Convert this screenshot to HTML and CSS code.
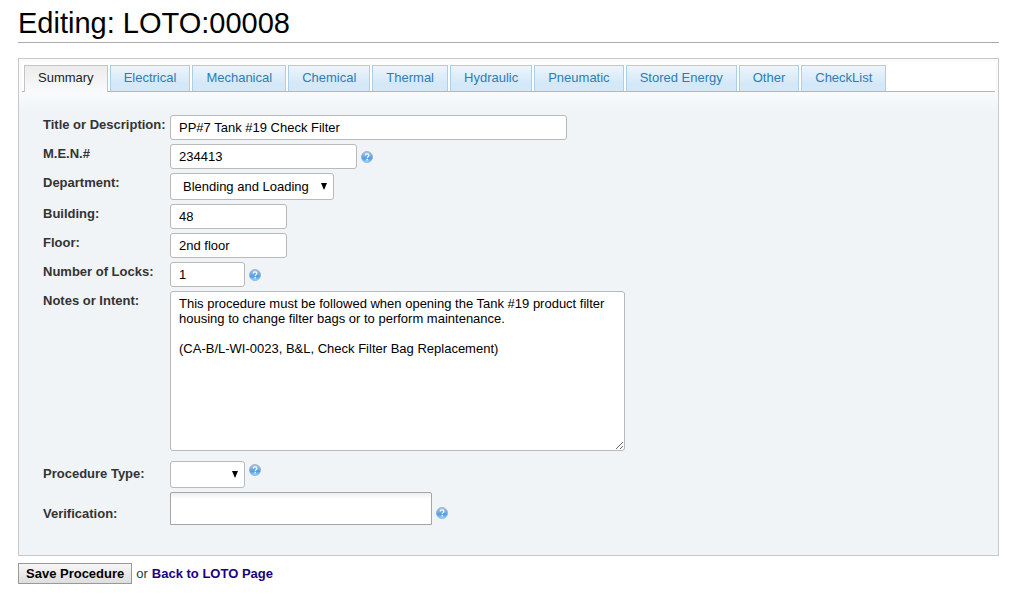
FILE: index.html
```html
<!DOCTYPE html>
<html lang="en">
<head>
    <meta charset="utf-8">
    <title>Editing: LOTO:00008</title>
    <link rel="stylesheet" href="styles.css">
</head>
<body>

    <!-- help bubble, reused next to the fields -->
    <svg class="defs" width="0" height="0" aria-hidden="true">
        <defs>
            <linearGradient id="ball" x1="0" y1="0" x2="0" y2="1">
                <stop offset="0" stop-color="#b4c6e0"/>
                <stop offset="0.35" stop-color="#7fb0e2"/>
                <stop offset="0.65" stop-color="#4b9fea"/>
                <stop offset="1" stop-color="#a0e0ff"/>
            </linearGradient>
            <symbol id="help" viewBox="0 0 12 12">
                <circle cx="6" cy="6" r="5.5" fill="url(#ball)" stroke="#8aa9d0" stroke-width="0.8"/>
                <path d="M4.2 4.500C4.300 3.300 5 2.900 6 2.900c1.200 0 1.900 .6 1.900 1.500C7.900 5.600 6.200 5.700 6.200 7.200" fill="none" stroke="#fff" stroke-width="1.2"/>
                <rect x="5.500" y="8" width="1.400" height="1.400" fill="#fff"/>
            </symbol>
        </defs>
    </svg>

    <h1>Editing: LOTO:00008</h1>

    <form id="procedure" onsubmit="event.preventDefault()">
        <div class="panel">
            <nav class="tabs">
                <a class="tab active" href="#summary">Summary</a>
                <a class="tab" href="#electrical">Electrical</a>
                <a class="tab" href="#mechanical">Mechanical</a>
                <a class="tab" href="#chemical">Chemical</a>
                <a class="tab" href="#thermal">Thermal</a>
                <a class="tab" href="#hydraulic">Hydraulic</a>
                <a class="tab" href="#pneumatic">Pneumatic</a>
                <a class="tab" href="#stored">Stored Energy</a>
                <a class="tab" href="#other">Other</a>
                <a class="tab" href="#checklist">CheckList</a>
            </nav>

            <div class="fields" id="summary">
                <div class="row">
                    <label for="title">Title or Description:</label>
                    <input class="text wide" type="text" id="title" value="PP#7 Tank #19 Check Filter">
                </div>
                <div class="row">
                    <label for="men">M.E.N.#</label>
                    <input class="text medium" type="text" id="men" value="234413">
                    <svg class="help"><use href="#help"/></svg>
                </div>
                <div class="row">
                    <label for="department">Department:</label>
                    <div class="select department">
                        <select id="department">
                            <option>Blending and Loading</option>
                        </select>
                    </div>
                </div>
                <div class="row">
                    <label for="building">Building:</label>
                    <input class="text small" type="text" id="building" value="48">
                </div>
                <div class="row">
                    <label for="floor">Floor:</label>
                    <input class="text small" type="text" id="floor" value="2nd floor">
                </div>
                <div class="row">
                    <label for="locks">Number of Locks:</label>
                    <input class="text tiny" type="text" id="locks" value="1">
                    <svg class="help"><use href="#help"/></svg>
                </div>
                <div class="row notes">
                    <label for="notes">Notes or Intent:</label>
                    <textarea class="text" id="notes">This procedure must be followed when opening the Tank #19 product filter housing to change filter bags or to perform maintenance.

(CA-B/L-WI-0023, B&amp;L, Check Filter Bag Replacement)</textarea>
                </div>
                <div class="row type">
                    <label for="type">Procedure Type:</label>
                    <div class="select tiny">
                        <select id="type">
                            <option></option>
                        </select>
                    </div>
                    <svg class="help"><use href="#help"/></svg>
                </div>
                <div class="row verify">
                    <label for="verification">Verification:</label>
                    <input type="text" id="verification">
                    <svg class="help"><use href="#help"/></svg>
                </div>
            </div>
        </div>

        <div class="actions">
            <button type="submit">Save Procedure</button>
            <span>or</span>
            <a href="#loto">Back to LOTO Page</a>
        </div>
    </form>

</body>
</html>
```
FILE: styles.css
```css
* {
    box-sizing: border-box;
}
body {
    margin: 6px 21px 12px 18px;
    background-color: #fff;
    color: #333;
    font: 13px/15px "Liberation Sans", Arial, sans-serif;
}
.defs {
    position: absolute;
}
h1 {
    margin: 0 0 15px;
    padding-bottom: 2px;
    border-bottom: 1px solid #aaa;
    color: #000;
    font-size: 29px;
    font-weight: normal;
    line-height: 34px;
}

/* tabs */
.panel {
    padding: 3px 3px 30px;
    border: 1px solid #c8c8c8;
    background: #f0f4f7 linear-gradient(#fbfbfc, #f9fafc 34px, #f0f4f7 54px) no-repeat;
}
.tabs {
    display: flex;
    gap: 2px;
    padding: 3px 2px 0;
    border-bottom: 1px solid #b5b5b5;
    background-color: #fff;
}
.tab {
    padding: 4px 13px 6px;
    border: 1px solid #aacfe8;
    border-bottom: 0;
    background: linear-gradient(#edf5fc, #d4e8f8 70%);
    color: #2e7db2;
    text-decoration: none;
    white-space: nowrap;
}
.tab.active {
    margin-bottom: -1px;
    border-color: #c4c4c4;
    background: linear-gradient(#ececec, #f9fafc);
    color: #222;
}

/* form */
.fields {
    display: flex;
    flex-direction: column;
    gap: 4px;
    padding: 23px 21px 0;
}
.row {
    display: flex;
    align-items: center;
}
label {
    flex: none;
    align-self: flex-start;
    width: 127px;
    padding-top: 2px;
    font-weight: bold;
}
.text,
.select {
    border: 1px solid #b9b9b9;
    border-radius: 3px;
    background-color: #fff;
}
.text {
    height: 25px;
    padding: 4px 8px;
    color: #000;
    font: inherit;
}
.wide { width: 397px; }
.medium { width: 187px; }
.small { width: 117px; }
.tiny { width: 75px; }
.department { width: 164px; }

.select {
    display: flex;
    position: relative;
    height: 27px;
}
.select::after {
    content: "";
    position: absolute;
    top: 9px;
    right: 6px;
    border: solid transparent;
    border-width: 7px 3px 0;
    border-top-color: #000;
    pointer-events: none;
}
select {
    width: 100%;
    padding: 0 20px 0 12px;
    border: 0;
    background: none;
    color: #000;
    font: inherit;
    appearance: none;
}
.help {
    flex: none;
    width: 12px;
    height: 12px;
    margin-left: 4px;
}
.notes {
    margin-bottom: 6px;
}
textarea.text {
    width: 455px;
    height: 160px;
}
.type label {
    padding-top: 5px;
}
.type .help {
    align-self: flex-start;
    margin-top: 3px;
}
.verify {
    align-items: flex-end;
}
.verify label {
    padding-top: 14px;
}
.verify .help {
    margin-bottom: 6px;
}
#verification {
    width: 262px;
    height: 33px;
    padding: 0 8px;
    border: 1px solid #a5a5a5;
    border-radius: 2px 2px 0 0;
    background: linear-gradient(#eee, #fff 6px);
    font: inherit;
}

/* footer */
.actions {
    display: flex;
    align-items: center;
    gap: 4px;
    padding-top: 7px;
}
.actions button {
    padding: 2px 7px;
    border: 1px solid #999;
    background: linear-gradient(#f6f6f6, #dedede);
    color: #000;
    font: inherit;
    font-weight: bold;
}
.actions a {
    color: #1a0082;
    font-weight: bold;
    text-decoration: none;
}
```
